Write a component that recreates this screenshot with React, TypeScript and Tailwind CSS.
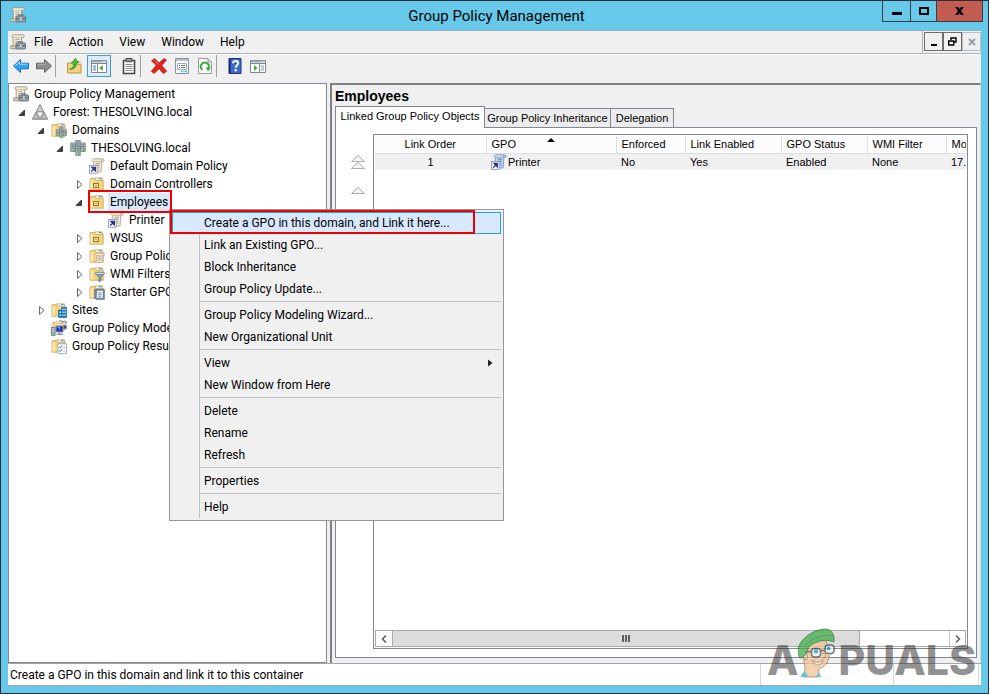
import { ReactNode, useState } from 'react';

type IconProps = { className?: string };

function Scroll() {
  return (
    <g>
      <path d="M4.5 1.5h9c1.3 0 1.5 2 .2 2.2h-1.5L11 12.5H2.8c-1.8 0-1.6-2 0-2.2l1.7-.3z" fill="#f3ecd9" stroke="#a99b7c" strokeWidth=".8" />
      <path d="M3 1.5h9.5v2.2H4.4C2.6 3.7 2 2 3 1.5z" fill="#fffaf0" stroke="#a99b7c" strokeWidth=".7" />
      <path d="M6 5.5h4.5M5.8 7.5h4.5M5.5 9.5h4" stroke="#a39a86" strokeWidth=".9" />
    </g>
  );
}

function ConsoleIcon({ className }: IconProps) {
  return (
    <svg viewBox="0 0 16 16" className={className ?? 'size-4 shrink-0'} aria-hidden="true">
      <path d="M3 .8h9.800c2 0 2 2.600.2 2.700h-1.400L11 12.500H3.200V3.400C1.600 3.200 1.700 1 3 .8z" fill="#f6efdd" stroke="#8f866f" strokeWidth=".8" />
      <path d="M3.200 3.400h8.200" stroke="#b5aa8c" strokeWidth=".7" />
      <path d="M5.200 5.400h4.400M5.200 7.400h4.400M5.200 9.400h1.600" stroke="#a39a86" strokeWidth=".9" />
      <path d="M.8 11.8h6v3H.8c-.8-1-.8-2 0-3z" fill="#d5cdb8" stroke="#857d69" strokeWidth=".7" />
      <path d="M8.8 9V7.800h3.800V9" fill="none" stroke="#5e6870" strokeWidth="1" />
      <rect x="6" y="9" width="9.500" height="6" rx=".6" fill="#98a4ae" stroke="#5a646e" strokeWidth=".8" />
      <path d="M6.200 11.700h9" stroke="#4a535b" strokeWidth=".9" />
      <rect x="9.900" y="10.800" width="1.800" height="1.800" fill="#eef2f5" />
    </svg>
  );
}

function ForestIcon() {
  return (
    <svg viewBox="0 0 16 16" className="size-4 shrink-0" aria-hidden="true">
      <path d="M8 .5 11.800 8H4.200z" fill="#cfcfcf" stroke="#757575" strokeWidth=".8" />
      <path d="M4 8 7.800 15.200H.4zM12 8l3.600 7.200H8.200z" fill="#bdbdbd" stroke="#6b6b6b" strokeWidth=".8" />
      <path d="M4.600 8h6.800L8 14.400z" fill="#f4f4f4" stroke="#8d8d8d" strokeWidth=".7" />
    </svg>
  );
}

function Server({ x, y }: { x: number; y: number }) {
  return (
    <g transform={`translate(${x} ${y})`}>
      <rect x=".5" y=".5" width="4.400" height="8.500" fill="#b9c4cc" stroke="#6b7780" strokeWidth=".8" />
      <path d="M1.200 2.300h3M1.200 4h3M1.200 5.700h3" stroke="#5d6a75" strokeWidth=".8" />
      <rect x="2.600" y="6.800" width="2" height="1.900" fill="#35d522" />
    </g>
  );
}

function ServersIcon() {
  return (
    <svg viewBox="0 0 16 16" className="size-4 shrink-0" aria-hidden="true">
      <Server x={5.3} y={0} />
      <Server x={0.3} y={2.5} />
      <Server x={10.3} y={2.5} />
      <Server x={5.3} y={6.3} />
    </svg>
  );
}

function LinkedGpoIcon({ blue }: { blue?: boolean }) {
  return (
    <svg viewBox="0 0 16 16" className="size-4 shrink-0" aria-hidden="true">
      <path d="M4.5 1h9.5c1.6 0 1.6 2.4 0 2.4h-1L12 14H4z" fill={blue ? '#bdd5ee' : '#f5efe0'} stroke={blue ? '#6f92b8' : '#a99b7c'} strokeWidth=".8" />
      <path d="M3.5 1h9v2.300h-8C3 3.300 2.600 1.800 3.500 1z" fill={blue ? '#dcebfa' : '#fffaf0'} stroke={blue ? '#6f92b8' : '#a99b7c'} strokeWidth=".7" />
      <path d="M6.500 5.300h4.600M6.300 7.200h4.600M9 9.200h1.600M9 11.200h1.400" stroke={blue ? '#5d80aa' : '#9d937d'} strokeWidth=".9" />
      <rect x=".5" y="7.500" width="7.600" height="7.800" fill="#f4f6fb" stroke="#8a90a8" strokeWidth=".8" />
      <path d="M2.200 13.600 5 10.800M3 9.500h3.300v3.300z" stroke="#27357f" strokeWidth="1.300" fill="#27357f" />
    </svg>
  );
}

function Folder({ children }: { children?: ReactNode }) {
  return (
    <svg viewBox="0 0 16 16" className="size-4 shrink-0" aria-hidden="true">
      <path d="M6 1.8h7.4v4H6z" fill="#fffdf4" stroke="#bd9a4d" strokeWidth=".7" />
      <path d="M9.8 2.6h2.8" stroke="#4ea3de" strokeWidth="1.2" />
      <path d="M1 3.8c0-.8.4-1.3 1.2-1.3h3.3L7 4.2h7.2v10H1z" fill="#f5d582" stroke="#c9a254" strokeWidth=".8" />
      <path d="M1.6 4.5h2v9h-2z" fill="#fdeeba" />
      {children}
    </svg>
  );
}

const OuFolder = () => (
  <Folder>
    <rect x="4.500" y="7.500" width="5" height="4" fill="#f3e3a8" stroke="#94782c" strokeWidth="1" />
    <path d="M6 9.500h2" stroke="#b39a4e" strokeWidth="1" />
  </Folder>
);

const DomainsFolder = () => (
  <Folder>
    <g transform="translate(4.6 4.5) scale(.72)">
      <Server x={5.3} y={0} />
      <Server x={0.3} y={4} />
      <Server x={10.3} y={4} />
      <Server x={5.3} y={6.4} />
    </g>
  </Folder>
);

const GpoFolder = () => (
  <Folder>
    <g transform="translate(4.4 4.4) scale(.8)">
      <Scroll />
    </g>
  </Folder>
);

const FilterFolder = () => (
  <Folder>
    <path d="M6 7.3h9.7l-3.8 4v3.5l-2 .8v-4.3z" fill="#8fa6b8" stroke="#4c6376" strokeWidth=".7" />
    <ellipse cx="10.8" cy="7.4" rx="4.8" ry="1.2" fill="#d5e1ea" stroke="#4c6376" strokeWidth=".6" />
  </Folder>
);

const StarterFolder = () => (
  <Folder>
    <path d="M5.8 5.3h9.5v10H6.8l-1-1.2z" fill="#6f8cab" stroke="#4a5f78" strokeWidth=".7" />
    <path d="M8.2 6.8h5.6v7H7.6z" fill="#edf3f8" />
    <path d="M9 8.8h3.6M9 10.6h3.6M9 12.3h3" stroke="#7290ad" strokeWidth=".9" />
  </Folder>
);

const SitesFolder = () => (
  <Folder>
    <path d="M7.5 8h3V5.4h5V15.5h-8z" fill="#1a7dc4" stroke="#0e5b98" strokeWidth=".6" />
    <path d="M11.4 6.8h1.2v1.4h-1.2zM13.4 6.8h1.2v1.4h-1.2zM8.6 9.5h1.4v1.4H8.6zM11.4 9.5h1.2v1.4h-1.2zM13.4 9.5h1.2v1.4h-1.2zM8.6 12.5h1.4v1.4H8.6zM11.4 12.5h1.2v1.4h-1.2zM13.4 12.5h1.2v1.4h-1.2z" fill="#d8efff" />
  </Folder>
);

const ResultsFolder = () => (
  <Folder>
    <rect x="7" y="5.8" width="8.4" height="9.6" fill="#fbfdff" stroke="#8c9db3" strokeWidth=".8" />
    <path d="m8.3 8.8 1 1.1 1.8-2.3M8.3 12.4l1 1.1 1.8-2.3" fill="none" stroke="#2d69b5" strokeWidth="1" />
    <path d="M12.2 9.4h2M12.2 13h2" stroke="#9aa8b9" strokeWidth=".9" />
  </Folder>
);

function ModelingIcon() {
  return (
    <svg viewBox="0 0 16 16" className="size-4 shrink-0" aria-hidden="true">
      <path d="M2 2.2h4l1 1h7v7H2z" fill="#f7dc93" stroke="#c9a254" strokeWidth=".7" />
      <path d="M8 1h3l.6 1.6L13 1l2.6 1-1 2.2" fill="#efe3f5" stroke="#68697d" strokeWidth=".9" />
      <rect x=".5" y="7.5" width="3.6" height="8" fill="#b3bfc8" stroke="#59646e" strokeWidth=".7" />
      <rect x="1.6" y="12.5" width="1.5" height="1.7" fill="#37c829" />
      <rect x="5" y="6" width="7" height="6" fill="#1f36b0" stroke="#8a93a1" strokeWidth="1" />
      <path d="M6.6 7.4h2v2" stroke="#82a8ff" strokeWidth="1" fill="none" />
      <path d="M7.4 12.4h2.4v1.4h2.4v1.2H5.4v-1.2h2z" fill="#8b98a5" />
      <rect x="12.4" y="5.4" width="3.1" height="3.4" fill="#3144a8" stroke="#8a93a1" strokeWidth=".7" />
    </svg>
  );
}

const toolIcon = 'h-[18px] w-[18px]';

const ArrowIcon = ({ forward }: { forward?: boolean }) => (
  <svg viewBox="0 0 18 18" className={toolIcon} aria-hidden="true">
    {forward ? (
      <g>
        <path d="M1.500 6.200h8V2.500l7 6.500-7 6.500v-3.700h-8z" fill="#8d8d8d" stroke="#626262" />
        <path d="M2.500 7.300h8V5" fill="none" stroke="#b5b5b5" />
      </g>
    ) : (
      <g>
        <path d="M16.500 6.200h-8V2.500l-7 6.500 7 6.500v-3.700h8z" fill="#31a5e8" stroke="#1b6fb5" />
        <path d="M3.200 8.800 7.600 4.800v2.400h8" fill="none" stroke="#a6defc" />
      </g>
    )}
  </svg>
);

const UpFolderIcon = () => (
  <svg viewBox="0 0 18 18" className={toolIcon} aria-hidden="true">
    <path d="M2.500 6h4L8 7.500h8V16H2.500z" fill="#f4d27e" stroke="#bb9345" />
    <path d="M10.500 4.500h4.500v3h-4.500z" fill="#fff7dc" stroke="#bb9345" strokeWidth=".7" />
    <path d="M4.500 12C8 11.500 9 9 8.800 6H6.400L10.500 1.500 13.600 6h-2.200c0 4-2.600 7-6.900 6z" fill="#3fc62c" stroke="#288a1b" strokeWidth=".8" />
  </svg>
);

const PaneIcon = ({ right }: { right?: boolean }) => (
  <svg viewBox="0 0 18 18" className={toolIcon} aria-hidden="true">
    <path d="M1.500 3.500h15v12h-15z" fill="#fff" stroke="#7e8890" />
    <path d="M2 4.500h14" stroke="#9aa6b1" strokeWidth="2" />
    <path d="M12.500 4.500h1M14.500 4.500h1" stroke="#fff" />
    <path d="M2 6.500h14" stroke="#7e8890" />
    {right ? (
      <g>
        <path d="M10.500 7v8" stroke="#7e8890" />
        <path d="M5 8.300v5.400L8.600 11z" fill="#3cae2b" />
        <path d="M12 9h3M12 11h3M12 13h3" stroke="#8b97a3" />
      </g>
    ) : (
      <g>
        <path d="M7.500 7v8" stroke="#7e8890" />
        <path d="M12.800 8.300v5.400L9.200 11z" fill="#3cae2b" />
        <path d="M3 9h3M3 11h3M3 13h3" stroke="#4a7fb0" />
      </g>
    )}
  </svg>
);

const ClipboardIcon = () => (
  <svg viewBox="0 0 18 18" className={toolIcon} aria-hidden="true">
    <path d="M3.500 3.500h11v13h-11z" fill="#fff" stroke="#474747" strokeWidth="1.600" />
    <path d="M6 1.500h6v3.200H6z" fill="#9a9a9a" stroke="#474747" />
    <path d="M5.500 7.500h7M5.500 9.500h7M5.500 11.500h7M5.500 13.500h7" stroke="#8a8a8a" />
  </svg>
);

const DeleteIcon = () => (
  <svg viewBox="0 0 18 18" className={toolIcon} aria-hidden="true">
    <path d="M1.500 3.800 4.600 1.500 9 6l5-4.500L16.400 3 11.700 8.600l5 5.600-3.300 2.400L9 11.700l-4.800 4.800-2.900-2.200 5-5.700z" fill="#e2231c" stroke="#a9140f" strokeWidth=".7" />
    <path d="M4 3.200 8.800 7.600" stroke="#f67b70" />
  </svg>
);

const PropertiesIcon = () => (
  <svg viewBox="0 0 18 18" className={toolIcon} aria-hidden="true">
    <path d="M2.500 1.500h13v15h-13z" fill="#fbfcfd" stroke="#88939d" />
    <path d="M3 3h12" stroke="#a8b3bd" strokeWidth="1.600" />
    <path d="M4.500 6.500h9v6h-9z" fill="#fff" stroke="#a1aab3" />
    <path d="M6 8.500h1M6 10.500h1M8 8.500h4M8 10.500h4" stroke="#697782" />
    <path d="M8 14.500h2.400M11.600 14.500H14" stroke="#37b8e8" strokeWidth="1.500" />
  </svg>
);

const RefreshIcon = () => (
  <svg viewBox="0 0 18 18" className={toolIcon} aria-hidden="true">
    <path d="M2.500 1.500H12l3.500 3.500v11.500h-13z" fill="#fbfbfb" stroke="#9a9a9a" />
    <path d="M12 1.500V5h3.500" fill="#e1e1e1" stroke="#9a9a9a" />
    <path d="M6.400 12.800a4 4 0 1 1 6.200-2" fill="none" stroke="#3cab3a" strokeWidth="2" />
    <path d="m9.800 10.400 5.200-.2-2.800 4.300z" fill="#3cab3a" />
  </svg>
);

const HelpIcon = () => (
  <svg viewBox="0 0 18 18" className={toolIcon} aria-hidden="true">
    <path d="M3 1.500h12v15H3z" fill="#3f68cf" stroke="#1b3580" />
    <path d="M3.800 2v14" stroke="#15296b" strokeWidth="1.600" />
    <path d="M7 6.300c0-3.200 5.200-3 5.200 0 0 2-2.500 2-2.500 4.400" fill="none" stroke="#fff" strokeWidth="1.900" />
    <circle cx="9.700" cy="13.300" r="1.200" fill="#fff" />
  </svg>
);

type TreeNode = {
  label: string;
  level: number;
  icon: ReactNode;
  state?: 'open' | 'closed';
};

const tree: TreeNode[] = [
  { label: 'Group Policy Management', level: 0, icon: <ConsoleIcon /> },
  { label: 'Forest: THESOLVING.local', level: 1, icon: <ForestIcon />, state: 'open' },
  { label: 'Domains', level: 2, icon: <DomainsFolder />, state: 'open' },
  { label: 'THESOLVING.local', level: 3, icon: <ServersIcon />, state: 'open' },
  { label: 'Default Domain Policy', level: 4, icon: <LinkedGpoIcon /> },
  { label: 'Domain Controllers', level: 4, icon: <OuFolder />, state: 'closed' },
  { label: 'Employees', level: 4, icon: <OuFolder />, state: 'open' },
  { label: 'Printer', level: 5, icon: <LinkedGpoIcon /> },
  { label: 'WSUS', level: 4, icon: <OuFolder />, state: 'closed' },
  { label: 'Group Policy Objects', level: 4, icon: <GpoFolder />, state: 'closed' },
  { label: 'WMI Filters', level: 4, icon: <FilterFolder />, state: 'closed' },
  { label: 'Starter GPOs', level: 4, icon: <StarterFolder />, state: 'closed' },
  { label: 'Sites', level: 2, icon: <SitesFolder />, state: 'closed' },
  { label: 'Group Policy Modeling', level: 2, icon: <ModelingIcon /> },
  { label: 'Group Policy Results', level: 2, icon: <ResultsFolder /> },
];

const indents = ['-ml-[10px]', 'ml-[9px]', 'ml-[28px]', 'ml-[47px]', 'ml-[66px]', 'ml-[85px]'];

const menuGroups = [
  ['Create a GPO in this domain, and Link it here...', 'Link an Existing GPO...', 'Block Inheritance', 'Group Policy Update...'],
  ['Group Policy Modeling Wizard...', 'New Organizational Unit'],
  ['View', 'New Window from Here'],
  ['Delete', 'Rename', 'Refresh'],
  ['Properties'],
  ['Help'],
];

const columns = [
  { name: 'Link Order', width: 'w-[111px]', value: '1' },
  { name: 'GPO', width: 'w-[130px]', value: 'Printer' },
  { name: 'Enforced', width: 'w-[69px]', value: 'No' },
  { name: 'Link Enabled', width: 'w-[96px]', value: 'Yes' },
  { name: 'GPO Status', width: 'w-[86px]', value: 'Enabled' },
  { name: 'WMI Filter', width: 'w-[79px]', value: 'None' },
  { name: 'Mo', width: 'w-[60px]', value: '17.' },
];

const tabs = [
  { name: 'Linked Group Policy Objects', width: 'w-[150px]' },
  { name: 'Group Policy Inheritance', width: 'w-[126px]' },
  { name: 'Delegation', width: 'w-[63px]' },
];

function ToolButton({ label, active, children }: { label: string; active?: boolean; children: ReactNode }) {
  return (
    <button
      type="button"
      aria-label={label}
      className={
        active
          ? 'ml-0.5 mr-1.5 flex h-[22px] w-6 items-center justify-center border border-[#3c9fd6] bg-[#dcebf8]'
          : 'flex h-[22px] w-[23px] items-center justify-center'
      }
    >
      {children}
    </button>
  );
}

const ToolSeparator = () => <span className="mr-1.5 h-[22px] w-px bg-[#a0a0a0]" />;

function TitleBar() {
  return (
    <header className="flex h-[29px] items-start">
      <div className="flex flex-1 items-center pt-1.5 pl-[9px]">
        <ConsoleIcon />
      </div>
      <h1 className="pt-1 text-[15px] leading-[22px]">Group Policy Management</h1>
      <div className="flex flex-1 justify-end pr-[5px]">
        <div className="flex h-[21px] border border-t-0 border-[#3b3b44]">
          <button type="button" aria-label="Minimize" className="flex w-7 items-center justify-center border-r border-[#3b3b44]">
            <span className="mt-1 h-[3px] w-2.5 bg-black" />
          </button>
          <button type="button" aria-label="Maximize" className="flex w-[26px] items-center justify-center border-r border-[#3b3b44]">
            <span className="h-2 w-2.5 border-2 border-black" />
          </button>
          <button type="button" aria-label="Close" className="flex w-[45px] items-center justify-center bg-[#c35b50]">
            <svg viewBox="0 0 9 8" className="h-2 w-[9px]" aria-hidden="true">
              <path d="M0 0h3l1.500 2L6 0h3L6 4l3 4H6L4.500 6 3 8H0l3-4z" fill="#000" />
            </svg>
          </button>
        </div>
      </div>
    </header>
  );
}

function MenuBar() {
  return (
    <nav className="flex h-[23px] items-center border-b border-[#adb2b5] pl-0.5">
      <ConsoleIcon />
      <div className="flex flex-1 items-center">
        {['File', 'Action', 'View', 'Window', 'Help'].map(name => (
          <button key={name} type="button" className="px-2 leading-[18px]">
            {name}
          </button>
        ))}
      </div>
      <div className="flex h-[22px] items-start border-l border-[#adb2b5] pt-px pl-px">
        <button type="button" aria-label="Minimize child window" className="flex h-[19px] w-[19px] items-end justify-center border border-[#6f6f6f] pb-1">
          <span className="h-0.5 w-1.5 bg-black" />
        </button>
        <button type="button" aria-label="Restore child window" className="flex h-[19px] w-[19px] items-center justify-center border border-[#6f6f6f]">
          <svg viewBox="0 0 9 9" className="size-[9px]" aria-hidden="true">
            <path d="M3 3V1h5v4H6" fill="none" stroke="#000" strokeWidth="1.400" />
            <path d="M.7 4h5v4h-5z" fill="none" stroke="#000" strokeWidth="1.400" />
          </svg>
        </button>
        <button type="button" aria-label="Close child window" className="flex h-[19px] w-[19px] items-center justify-center border border-[#b5bec4]">
          <svg viewBox="0 0 8 8" className="size-2" aria-hidden="true">
            <path d="m1 1 6 6M7 1 1 7" stroke="#93a1ad" strokeWidth="2" />
          </svg>
        </button>
      </div>
    </nav>
  );
}

function Toolbar() {
  return (
    <div className="flex h-[29px] items-start border-t border-white pl-px">
      <ToolButton label="Back"><ArrowIcon /></ToolButton>
      <ToolButton label="Forward"><ArrowIcon forward /></ToolButton>
      <ToolSeparator />
      <ToolButton label="Up one level"><UpFolderIcon /></ToolButton>
      <ToolButton label="Show console tree" active><PaneIcon /></ToolButton>
      <ToolButton label="Paste"><ClipboardIcon /></ToolButton>
      <ToolSeparator />
      <ToolButton label="Delete"><DeleteIcon /></ToolButton>
      <ToolButton label="Properties"><PropertiesIcon /></ToolButton>
      <ToolButton label="Refresh"><RefreshIcon /></ToolButton>
      <ToolSeparator />
      <ToolButton label="Help"><HelpIcon /></ToolButton>
      <ToolButton label="Show action pane"><PaneIcon right /></ToolButton>
    </div>
  );
}

function ConsoleTree() {
  return (
    <ul className="w-[319px] shrink-0 border border-[#828790] bg-white pt-px">
      {tree.map(node => (
        <li key={node.label + node.level} className="flex h-[18px] items-center">
          <span className={`flex w-[14px] shrink-0 ${indents[node.level]}`}>
            {node.state && (
              <button type="button" aria-label={`Toggle ${node.label}`}>
                <svg viewBox="0 0 8 10" className="h-2.5 w-2" aria-hidden="true">
                  {node.state === 'open' ? (
                    <path d="M6.500 3v5.500H1z" fill="#404040" stroke="#262626" strokeWidth=".8" />
                  ) : (
                    <path d="M2.500 1.500v8L7 5.500z" fill="#fff" stroke="#6c6c6c" />
                  )}
                </svg>
              </button>
            )}
          </span>
          {node.icon}
          <span className={`ml-[3px] px-0.5 leading-[18px] whitespace-nowrap ${node.label === 'Employees' ? 'bg-[#d9e8fa]' : ''}`}>
            {node.label}
          </span>
        </li>
      ))}
    </ul>
  );
}

function GpoTable() {
  return (
    <table className="w-full table-fixed border-collapse text-left">
      <thead>
        <tr className="h-[17px] bg-[#fcfcfc]">
          {columns.map((col, i) => (
            <th
              key={col.name}
              className={`relative overflow-hidden border-r border-b border-[#dedede] p-0 font-normal whitespace-nowrap ${col.width} ${i === 0 ? 'text-center' : 'pl-[5px]'}`}
            >
              {col.name}
              {col.name === 'GPO' && (
                <svg viewBox="0 0 8 4" className="absolute top-0.5 left-[60px] h-1 w-2" aria-hidden="true">
                  <path d="M0 4 4 0l4 4z" fill="#000" />
                </svg>
              )}
            </th>
          ))}
        </tr>
      </thead>
      <tbody>
        <tr className="h-[17px] bg-[#f0f0f0]">
          {columns.map((col, i) => (
            <td key={col.name} className={`overflow-hidden p-0 whitespace-nowrap ${i === 0 ? 'text-center' : 'pl-[5px]'}`}>
              {col.name === 'GPO' ? (
                <span className="flex items-center gap-px">
                  <LinkedGpoIcon blue />
                  {col.value}
                </span>
              ) : (
                col.value
              )}
            </td>
          ))}
        </tr>
      </tbody>
    </table>
  );
}

function MoveArrow({ double, label }: { double?: boolean; label: string }) {
  return (
    <button type="button" aria-label={label} className="h-7">
      <svg viewBox="0 0 16 16" className="size-4" aria-hidden="true">
        <g fill="#f4f4f4" stroke="#adadad">
          {double && <path d="M1.500 7.500 8 1.500l6.500 6z" />}
          {double ? <path d="M1.500 14.500 8 8.500l6.500 6z" /> : <path d="M1.500 11.500 8 5.500l6.500 6z" />}
        </g>
      </svg>
    </button>
  );
}

function ScrollBar() {
  return (
    <div className="flex h-[17px] border border-[#a9a9a9] bg-white">
      <button type="button" aria-label="Scroll left" className="flex w-4 items-center justify-center">
        <svg viewBox="0 0 6 8" className="h-2 w-1.5" aria-hidden="true">
          <path d="M5 .5 1.500 4 5 7.500" fill="none" stroke="#505050" strokeWidth="1.400" />
        </svg>
      </button>
      <div className="flex-1">
        <div className="flex h-full w-[84%] items-center justify-center gap-px border-x border-[#a9a9a9] bg-[#dcdcdc]">
          <span className="h-[7px] w-0.5 bg-[#606060]" />
          <span className="h-[7px] w-0.5 bg-[#606060]" />
          <span className="h-[7px] w-0.5 bg-[#606060]" />
        </div>
      </div>
      <button type="button" aria-label="Scroll right" className="flex w-4 items-center justify-center border-l border-[#c4c4c4]">
        <svg viewBox="0 0 6 8" className="h-2 w-1.5" aria-hidden="true">
          <path d="M1 .5 4.500 4 1 7.500" fill="none" stroke="#505050" strokeWidth="1.400" />
        </svg>
      </button>
    </div>
  );
}

function DetailsPane() {
  const [tab, setTab] = useState(tabs[0].name);

  return (
    <section className="ml-[3px] flex min-w-0 flex-1 flex-col border-t-2 border-r border-l-2 border-t-[#808080] border-r-[#dcdcdc] border-l-[#808080] pr-[3px] pb-[5px] pl-[3px] font-['Liberation_Sans',Arial,sans-serif] text-[11px]">
      <h2 className="pt-0.5 text-[14px] leading-[18px] font-bold">Employees</h2>
      <div className="mt-px flex items-end">
        {tabs.map(({ name, width }) => (
          <button
            key={name}
            type="button"
            onClick={() => setTab(name)}
            className={
              name === tab
                ? `relative -mb-px h-[22px] border border-b-0 border-[#828790] bg-white pb-0.5 whitespace-nowrap ${width}`
                : `h-[19px] border border-b-0 border-l-0 border-[#828790] bg-[#ececec] whitespace-nowrap ${width}`
            }
          >
            {name}
          </button>
        ))}
      </div>
      <div className="flex min-w-0 flex-1 border border-[#828790] bg-white pt-1.5 pr-2 pb-2">
        <div className="flex w-[37px] shrink-0 flex-col items-end pt-[14px] pr-[7px]">
          <MoveArrow double label="Move link to top" />
          <MoveArrow label="Move link up" />
        </div>
        <div className="flex min-w-0 flex-1 flex-col border border-[#828790] p-px">
          <div className="min-w-0 flex-1 overflow-hidden">
            <div className="min-w-[631px]">
              <GpoTable />
            </div>
          </div>
          <ScrollBar />
        </div>
      </div>
    </section>
  );
}

function ContextMenu() {
  return (
    <div className="absolute top-[208px] left-[168px] w-[335px] border border-[#979797] bg-[#f0f0f0] p-0.5">
      {menuGroups.map((group, g) => (
        <div key={group[0]}>
          {g > 0 && (
            <div className="ml-[27px] h-1 border-l border-[#c3c3c3] pt-px">
              <div className="h-px bg-[#c3c3c3]" />
            </div>
          )}
          {group.map((item, i) =>
            g === 0 && i === 0 ? (
              <button key={item} type="button" className="flex h-[22px] w-full items-center border border-[#26a0da] bg-[#d9e9fd] pl-[31px]">
                {item}
              </button>
            ) : (
              <button key={item} type="button" className="flex h-[22px] w-full items-center justify-between pr-2 pl-[27px]">
                <span className="flex h-full items-center border-l border-[#c3c3c3] pl-1">{item}</span>
                {item === 'View' && (
                  <svg viewBox="0 0 5 8" className="h-2 w-[5px]" aria-hidden="true">
                    <path d="M0 .5v7L4.500 4z" fill="#222" />
                  </svg>
                )}
              </button>
            )
          )}
        </div>
      ))}
    </div>
  );
}

function Watermark() {
  return (
    <div className="pointer-events-none absolute right-3 bottom-2 flex items-end font-[Inter,sans-serif] text-[41px] leading-[50px] font-extrabold text-[#333]/55">
      <span>A</span>
      <svg viewBox="0 0 38 50" className="mb-[7px] h-[50px] w-[38px] opacity-75" aria-hidden="true">
        <path d="M5 27 9 17 27 11l2 5 2 9c1 7-3 13-8 15l-2 1-1 8H6l1-9z" fill="#f3c293" stroke="#7a6450" strokeWidth=".8" />
        <path d="M5 29c-2-3 0-6 3-5l2 6-2 2z" fill="#f3c293" stroke="#7a6450" strokeWidth=".7" />
        <path d="M2 30C0 28 0 23 .8 19 3 11 14 2 27 1c6 0 10 5 9 13-5-2-10-2-14-1-6 2-11 4-12 8-1 4-2 7-8 9z" fill="#3fae49" stroke="#2c6d33" strokeWidth="1" />
        <path d="M8 17C15 9 26 6 35 8" fill="none" stroke="#2c8036" strokeWidth=".8" />
        <rect x="13.500" y="20.500" width="9" height="8.500" rx="3" fill="#e8f6fc" stroke="#4a4a4a" strokeWidth="1.500" />
        <rect x="27" y="17" width="9" height="8.500" rx="3" fill="#e8f6fc" stroke="#4a4a4a" strokeWidth="1.500" />
        <path d="m22.500 23 4.500-1M13.500 23.500 7 24" stroke="#4a4a4a" strokeWidth="1.500" />
        <circle cx="18" cy="23.500" r="2.200" fill="#2e8fc4" />
        <circle cx="30.500" cy="20.500" r="2" fill="#2e8fc4" />
        <path d="M24 25c5 1 5 5 1 5" fill="none" stroke="#7a6450" />
        <path d="M14 32c4 3 7 3 11 0-1 6-8 7-11 0z" fill="#fff" stroke="#7a6450" strokeWidth=".8" />
        <path d="M3 49c0-3 2-5 4-5l4 5zM18 49l3-5 2 5z" fill="#35a8dc" />
      </svg>
      <span className="ml-0.5">PUALS</span>
    </div>
  );
}

function App() {
  return (
    <main className="relative flex min-h-screen flex-col border border-[#2d2d38] bg-[#66c9ea] px-[7px] pb-[7px] font-[Roboto,'Open_Sans',sans-serif] text-[12px] text-black">
      <div className="-mx-[7px]">
        <TitleBar />
      </div>
      <div className="flex flex-1 flex-col border-t border-[#8fb5c2] bg-[#f0f0f0]">
        <MenuBar />
        <Toolbar />
        <div className="flex flex-1">
          <ConsoleTree />
          <DetailsPane />
        </div>
        <footer className="flex h-[23px] items-stretch border-y border-[#a5a5a5] bg-white pr-0.5 pl-0.5">
          <p className="flex-1 pt-px leading-[21px]">Create a GPO in this domain and link it to this container</p>
          <span className="w-[133px] border-l border-[#d7d7d7]" />
          <span className="w-[86px] border-x border-[#d7d7d7]" />
        </footer>
      </div>
      <ContextMenu />
      {/* red call-outs around the selected unit and its first command */}
      <div className="pointer-events-none absolute top-[189px] left-[87px] h-[23px] w-[84px] border-2 border-[#f00000]" />
      <div className="pointer-events-none absolute top-[209px] left-[169px] h-6 w-[305px] border-2 border-[#f00000]" />
      <Watermark />
    </main>
  );
}

export default App;
